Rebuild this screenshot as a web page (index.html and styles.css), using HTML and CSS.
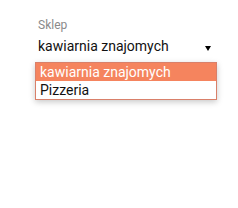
FILE: index.html
```html
<!DOCTYPE html>
<html lang="pl">
<head>
  <meta charset="UTF-8">
  <meta name="viewport" content="width=device-width, initial-scale=1.0">
  <title>Sklep</title>
  <link rel="stylesheet" href="styles.css">
</head>
<body>

  <div class="field">
    <div class="field-label">Sklep</div>
    <div class="select-box">
      <span class="select-value">kawiarnia znajomych</span>
      <span class="select-arrow"></span>
    </div>

    <div class="select-menu">
      <div class="select-option selected">kawiarnia znajomych</div>
      <div class="select-option">Pizzeria</div>
    </div>
  </div>

</body>
</html>
```

FILE: styles.css
```css
  * {
    margin: 0;
    padding: 0;
    box-sizing: border-box;
  }

  body {
    font-family: Roboto, "Liberation Sans", sans-serif;
    background-color: #fff;
    width: 238px;
    height: 208px;
    overflow: hidden;
  }

  .field {
    position: relative;
    padding: 18px 0 0 38px;
  }

  .field-label {
    font-size: 12px;
    line-height: 14px;
    color: #8a8a8a;
  }

  .select-box {
    display: flex;
    justify-content: space-between;
    align-items: center;
    width: 173px;
    margin-top: 5px;
    font-size: 14px;
    line-height: 18px;
    color: #111;
  }

  .select-arrow {
    width: 0;
    height: 0;
    margin-top: 5px;
    border-left: 3px solid transparent;
    border-right: 3px solid transparent;
    border-top: 5px solid #000;
  }

  .select-menu {
    position: absolute;
    top: 62px;
    left: 35px;
    width: 182px;
    background-color: #fff;
    border: 1px solid #d9806a;
    box-shadow: 0 2px 6px rgba(0, 0, 0, 0.22);
  }

  .select-option {
    font-size: 14px;
    line-height: 18px;
    padding-left: 4px;
    color: #111;
  }

  .select-option.selected {
    background-color: #f5845e;
    color: #fff;
  }
```
